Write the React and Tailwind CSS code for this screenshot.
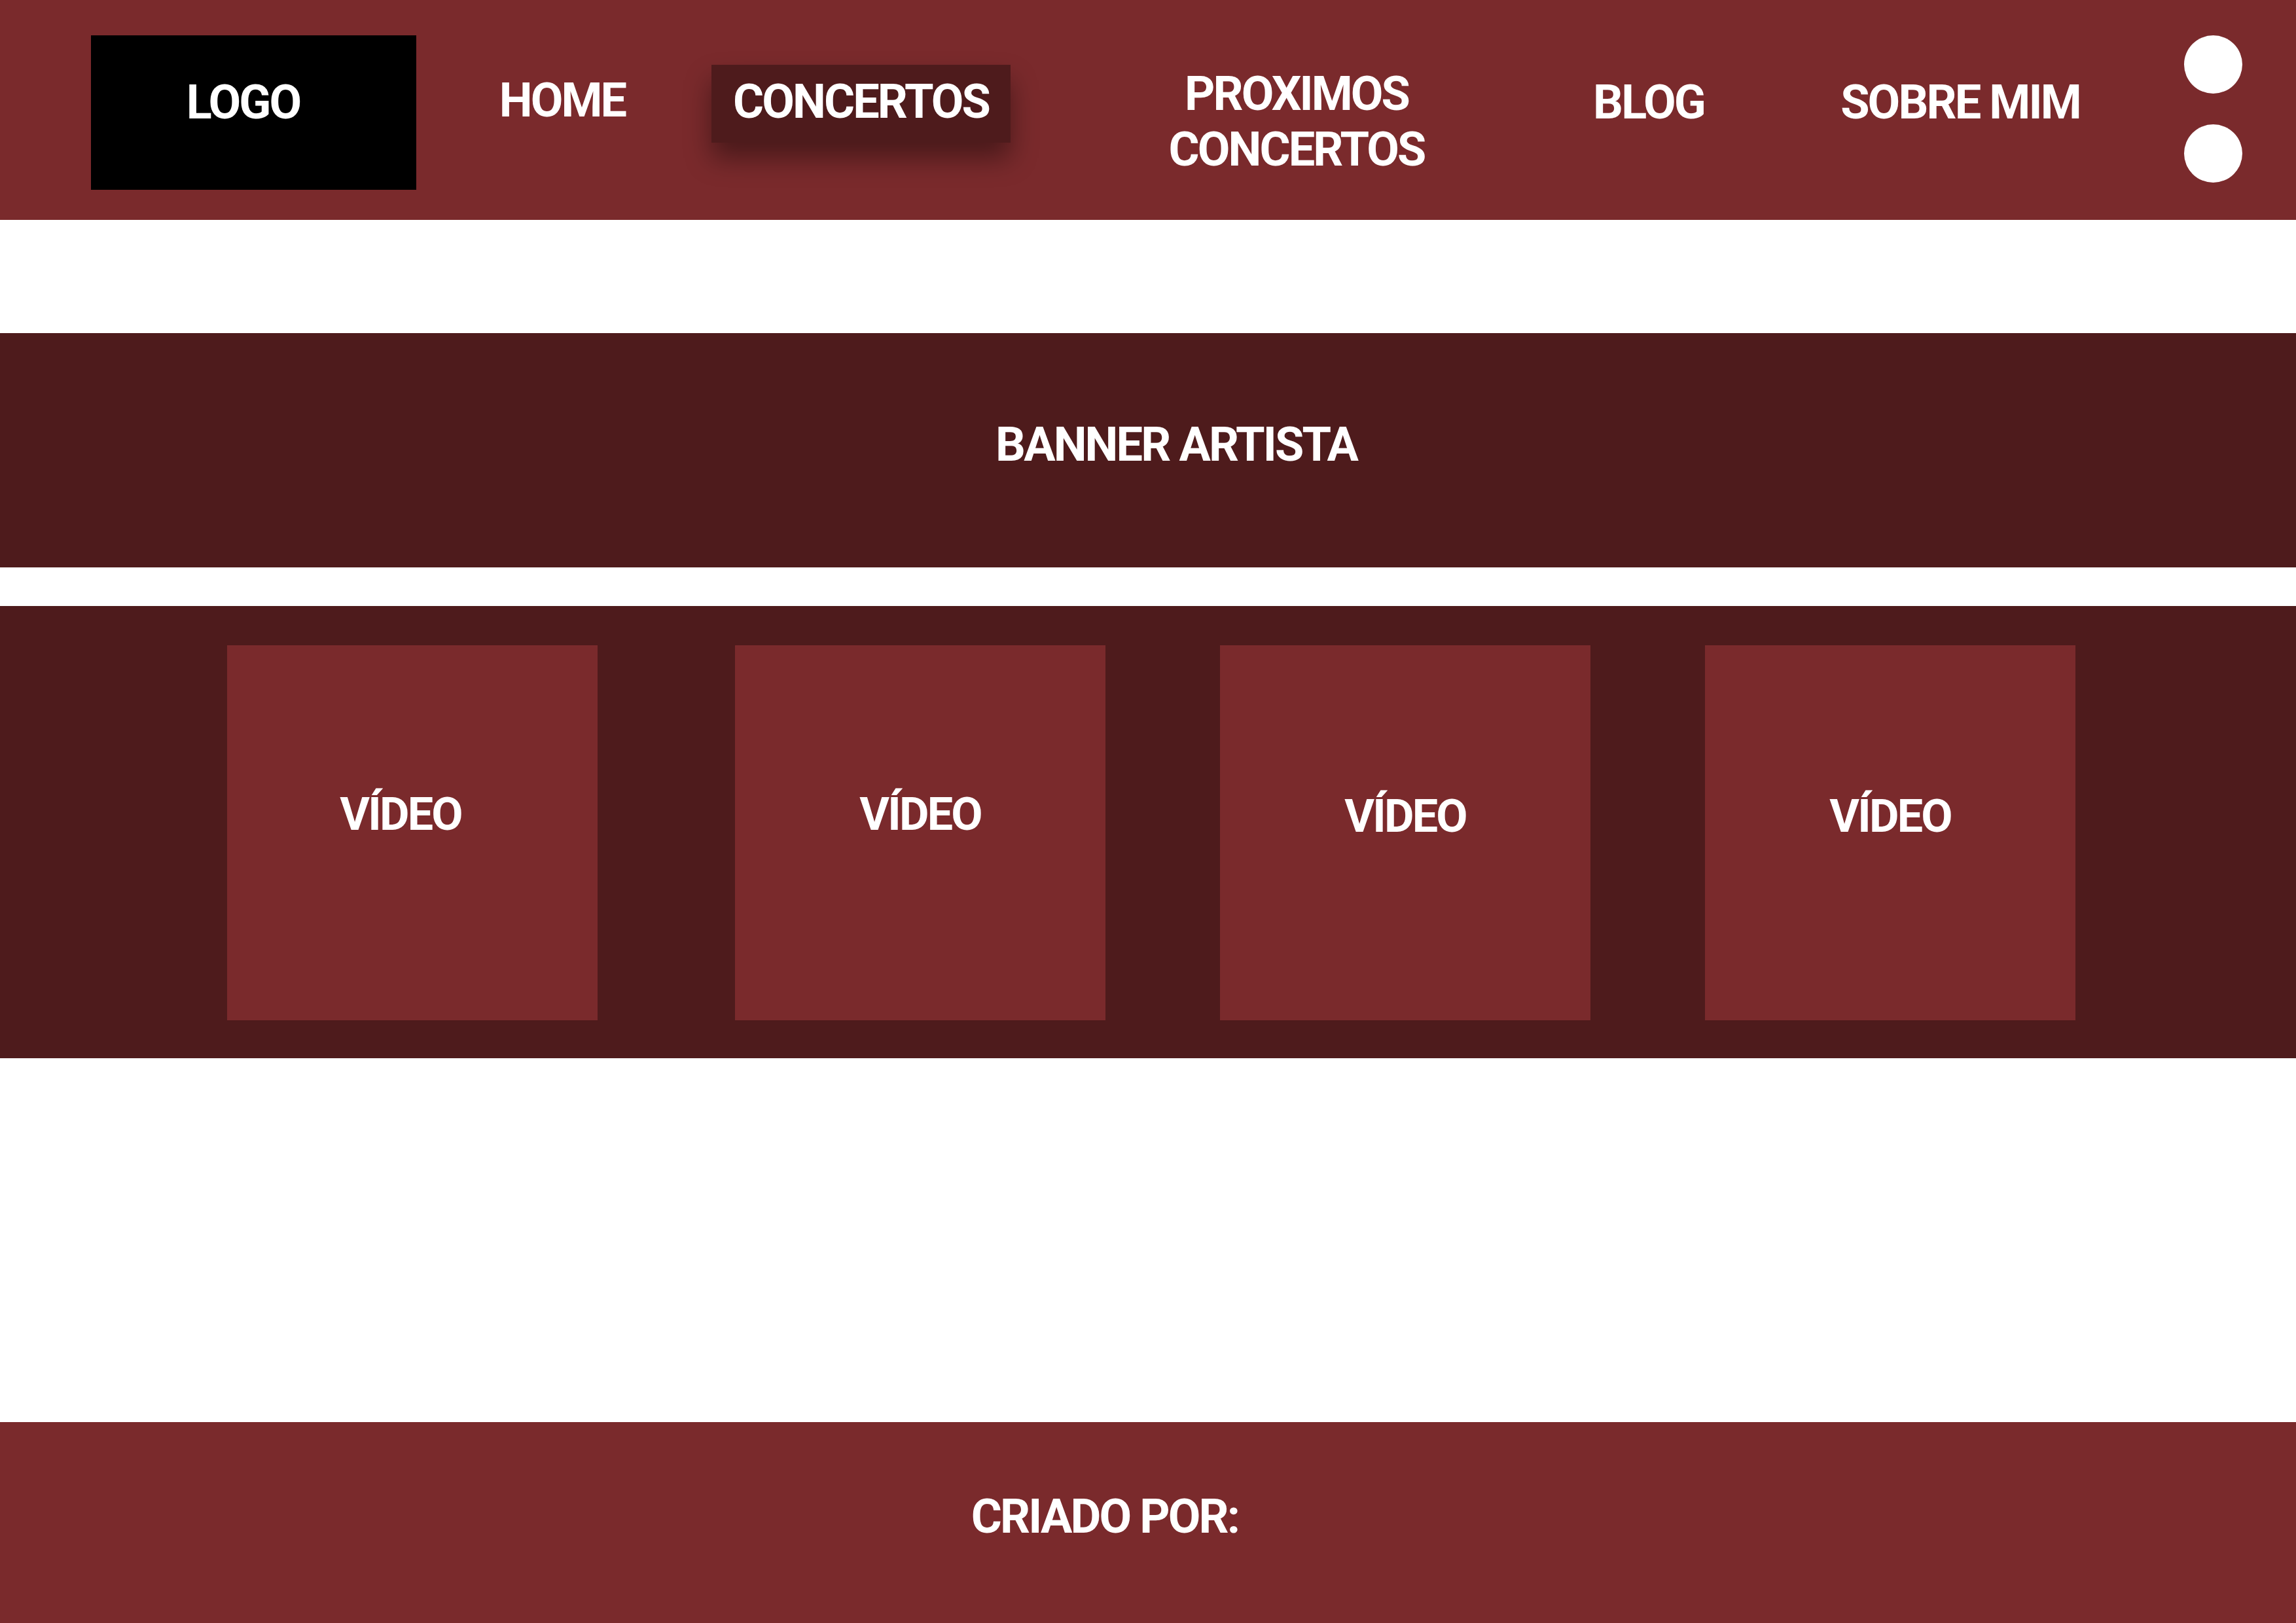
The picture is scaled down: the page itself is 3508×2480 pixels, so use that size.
import React from 'react';

// Wireframe-style landing page for an artist site

const HEADER = 'bg-[#7a2a2c]';
const DARK = 'bg-[#4e1b1c]';
const FONT = { fontFamily: 'Roboto, "Liberation Sans", sans-serif' };

const VIDEOS = [
    { ml: 'ml-0', text: 'pt-[223px] pr-[36px]' },
    { ml: 'ml-[210px]', text: 'pt-[223px]' },
    { ml: 'ml-[175px]', text: 'pt-[226px]' },
    { ml: 'ml-[175px]', text: 'pt-[226px]' },
];

const Header = () => (
    <header className={`${HEADER} h-[336px] flex items-start pl-[139px]`}>
        {/* Logo */}
        <div className="mt-[54px] w-[497px] h-[236px] bg-black flex justify-center pr-[32px] pt-[67px]">
            <span className="text-[72px] leading-none font-bold text-white tracking-[-0.04em]">LOGO</span>
        </div>

        {/* Nav */}
        <a className="ml-[123px] mt-[118px] w-[200px] text-center text-[72px] leading-none font-bold text-white tracking-[-0.04em]">
            HOME
        </a>
        <a className="ml-[128px] mt-[99px] w-[457px] h-[119px] flex justify-center pt-[21px] bg-[#4e1b1c] shadow-[0_24px_40px_rgba(0,0,0,0.4)] text-[72px] leading-none font-bold text-white tracking-[-0.04em]">
            CONCERTOS
        </a>
        <a className="ml-[227px] mt-[101px] w-[420px] text-center text-[72px] leading-[85px] font-bold text-white tracking-[-0.04em]">
            PROXIMOS
            <br />
            CONCERTOS
        </a>
        <a className="ml-[228px] mt-[121px] w-[200px] text-center text-[72px] leading-none font-bold text-white tracking-[-0.04em]">
            BLOG
        </a>
        <a className="ml-[176px] mt-[121px] w-[400px] text-center text-[72px] leading-none font-bold text-white tracking-[-0.04em]">
            SOBRE MIM
        </a>

        {/* Dots */}
        <div className="ml-[142px] mt-[54px] flex flex-col gap-[47px]">
            <div className="w-[89px] h-[89px] rounded-full bg-white" />
            <div className="w-[89px] h-[89px] rounded-full bg-white" />
        </div>
    </header>
);

export default function App() {
    return (
        <div className="w-full h-[2480px] bg-white flex flex-col" style={FONT}>
            <Header />

            <div className="h-[173px]" />

            {/* Banner */}
            <section className={`${DARK} h-[358px] flex justify-center pl-[86px] pt-[135px]`}>
                <h1 className="text-[72px] leading-none font-bold text-white tracking-[-0.04em]">BANNER ARTISTA</h1>
            </section>

            <div className="h-[59px]" />

            {/* Videos */}
            <section className={`${DARK} h-[691px] flex pl-[347px] pt-[60px]`}>
                {VIDEOS.map((v, i) => (
                    <div key={i} className={`${v.ml} ${HEADER} ${v.text} w-[566px] h-[573px] flex justify-center`}>
                        <span className="text-[70px] leading-none font-bold text-white tracking-[-0.04em]">VÍDEO</span>
                    </div>
                ))}
            </section>

            <div className="h-[556px]" />

            {/* Footer */}
            <footer className={`${HEADER} h-[307px] flex justify-center pr-[132px] pt-[109px]`}>
                <p className="text-[72px] leading-none font-bold text-white tracking-[-0.04em]">CRIADO POR:</p>
            </footer>
        </div>
    );
}
